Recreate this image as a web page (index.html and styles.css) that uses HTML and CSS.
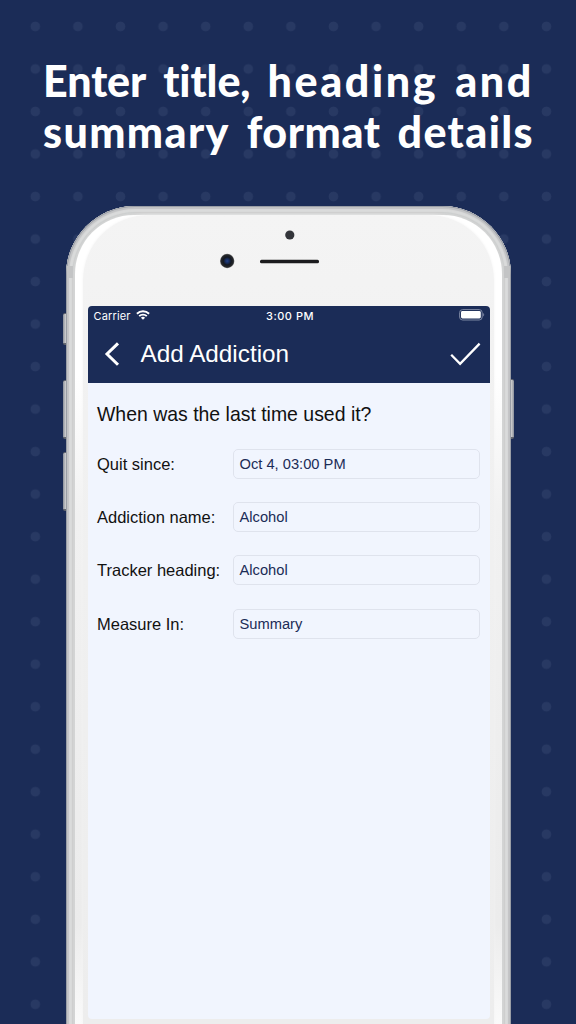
FILE: index.html
```html
<!DOCTYPE html>
<html lang="en">
<head>
<meta charset="utf-8">
<title>Add Addiction</title>
<link rel="stylesheet" href="styles.css">
</head>
<body>
<main class="poster">
  <h1 class="headline">
    <span class="line"><span class="tight">Enter</span> <span class="tight">title,</span> <span class="wide">heading</span> <span class="wide">and</span></span>
    <span class="line"><span class="medium">summary</span> <span class="normal">format</span> <span class="medium">details</span></span>
  </h1>
  <section class="phone">
    <i class="side mute"></i><i class="side vol-up"></i><i class="side vol-down"></i><i class="side power"></i>
    <div class="bezel">
      <i class="antenna left"></i><i class="antenna right"></i>
      <div class="face">
        <svg class="sensors" width="140" height="60" viewBox="0 0 140 60">
          <defs><radialGradient id="lens"><stop offset="0" stop-color="#214189"/><stop offset=".3" stop-color="#172b59"/><stop offset=".55" stop-color="#141820"/><stop offset=".85" stop-color="#25272b"/><stop offset="1" stop-color="#777"/></radialGradient></defs>
          <circle cx="89.8" cy="15" r="4.6" fill="#33353a"/>
          <circle cx="27.2" cy="41" r="7.2" fill="url(#lens)"/>
          <rect x="60" y="39.7" width="59" height="3.6" rx="1.5" fill="#1c1c1e"/>
        </svg>
        <div class="screen">
          <header class="top">
            <div class="status">
              <span class="carrier">Carrier</span>
              <svg class="wifi" width="14" height="10" viewBox="0 0 14 10" fill="none" stroke="#fff" stroke-width="1.9"><path d="M.9 3.8a8.7 8.7 0 0 1 12.2 0"/><path d="M3.2 6.2a5.4 5.4 0 0 1 7.6 0"/><path d="M7 9.7 4.9 7.7a3 3 0 0 1 4.2 0z" fill="#fff" stroke="none"/></svg>
              <span class="clock">3:00 PM</span>
              <svg class="battery" width="26" height="12" viewBox="0 0 26 12"><rect x=".6" y=".6" width="22.6" height="10.4" rx="3" fill="none" stroke="#7d87a3" stroke-width="1"/><rect x="2" y="2.1" width="19.8" height="7.4" rx="1.4" fill="#fff"/><path d="M24.2 4v3.6q1-.6 1-1.8t-1-1.8" fill="#7d87a3"/></svg>
            </div>
            <div class="nav">
              <svg width="16" height="26" viewBox="0 0 16 26" fill="none" stroke="#fff" stroke-width="3"><path d="M14 2.3 3 13l11 10.8"/></svg>
              <h2 class="nav-title">Add Addiction</h2>
              <svg class="check" width="31" height="24" viewBox="0 0 31 24" fill="none" stroke="#fff" stroke-width="2.3"><path d="m1.2 12.8 8.9 9L29.6 1.6"/></svg>
            </div>
          </header>
          <div class="form">
            <p class="question">When was the last time used it?</p>
            <div class="row"><span class="label">Quit since:</span><span class="field">Oct 4, 03:00 PM</span></div>
            <div class="row"><span class="label">Addiction name:</span><span class="field">Alcohol</span></div>
            <div class="row"><span class="label">Tracker heading:</span><span class="field">Alcohol</span></div>
            <div class="row"><span class="label">Measure In:</span><span class="field">Summary</span></div>
          </div>
        </div>
      </div>
    </div>
  </section>
</main>
</body>
</html>
```
FILE: styles.css
```css
* { box-sizing: border-box; }
body { margin: 0; background: #1b2c57; }
h1, h2, p { margin: 0; font-weight: normal; }
.poster {
  width: 576px; height: 1024px; overflow: hidden;
  background: radial-gradient(circle at center, #283963 0 4.4px, transparent 5.2px) 14px 5.2px / 42.6px 42.53px, #1b2c57;
  display: flex; flex-direction: column; align-items: center;
}
.headline {
  width: 492px; height: 206px; padding: 55px 0 0 1px; flex: none;
  color: #fff; font: 900 43px/51px Lato, sans-serif;
}
.line { display: flex; justify-content: space-between; white-space: nowrap; }
.tight { letter-spacing: -0.1px; }
.normal { letter-spacing: 0.6px; }
.medium { letter-spacing: 1.4px; }
.wide { letter-spacing: 2.6px; }
.phone {
  position: relative; width: 445px; height: 900px; flex: none; margin-left: 1px;
  padding: 9px 9px 0; border-radius: 69px 69px 0 0;
  background: #d3d4d4;
  box-shadow: inset 0 0 0 1px #9a9ea6, inset 0 0 1px 3px #c2c3c5, inset 0 0 1px 6px #dadbdb, inset 0 0 1px 7px #cbcdcd;
}
.bezel {
  height: 891px; border-radius: 59px 59px 0 0; padding: 0 8px;
  background: linear-gradient(#fff 0, #fff 160px, #f1f1f1 300px, #ededed 600px, #ececec 710px, #fafafa 809px);
}
.face {
  height: 891px; border-radius: 65px 65px 0 0; background: linear-gradient(#f4f4f4, #f1f1f1 200px, #ededed 809px);
  padding: 5px 4.5px 0; box-shadow: 0 0 3px #f4f4f4;
}
.sensors { display: block; margin: 0 0 26px 112.5px; }
.screen { height: 713px; border-radius: 4px; overflow: hidden; background: #f1f5fe; }
.top { height: 77px; background: #1b2c57; color: #fff; }
.status { height: 20px; position: relative; display: flex; align-items: center; padding: 0 5px 0 6px; font: 11px/20px Inter, sans-serif; letter-spacing: .15px; }
.wifi { margin-left: 5px; margin-top: -2px; }
.clock { position: absolute; left: 0; right: 0; text-align: center; font-weight: 500; padding-left: 3px; letter-spacing: .5px; }
.battery { margin-left: auto; margin-top: -2px; }
.nav { height: 56px; display: flex; align-items: center; padding: 0 9px 0 16px; }
.nav-title { flex: 1; margin-left: 21px; font: 24.3px/30px "Liberation Sans", sans-serif; }
.form { padding: 18px 9.5px; font: 16.5px/31px "Liberation Sans", sans-serif; color: #111; }
.question { font-size: 19.45px; line-height: 26px; margin-bottom: 21.5px; }
.row { display: flex; height: 30px; margin-bottom: 23.4px; }
.label { width: 135.5px; white-space: nowrap; }
.field { flex: 1; border: 1px solid #dfe3ed; border-radius: 5px; padding-left: 6px; font-size: 14.7px; line-height: 28px; color: #1b2c57; }
.antenna { position: absolute; top: 60px; width: 6px; height: 12px; background: #c3c4c5; }
.left { left: 1px; }
.right { right: 1px; }
.side { position: absolute; width: 3px; background: linear-gradient(90deg, #8a8f9a, #d4d4d4); border: solid #62666f; border-width: 1px 0 2px; border-radius: 2px 0 0 2px; left: -3px; }
.mute { top: 107px; height: 32px; }
.vol-up { top: 174px; height: 59px; }
.vol-down { top: 246px; height: 59px; }
.power { left: auto; right: -3px; top: 173px; height: 60px; transform: scaleX(-1); }
```
